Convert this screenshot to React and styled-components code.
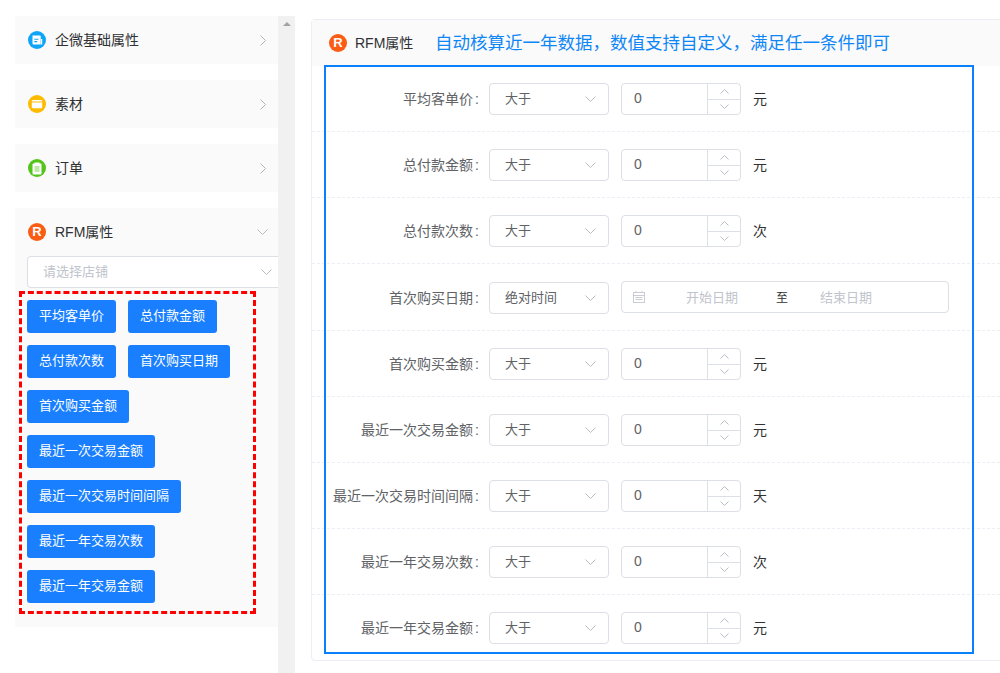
import React from 'react';
import styled, { createGlobalStyle } from 'styled-components';

const Global = createGlobalStyle`
  html, body { margin: 0; padding: 0; background: #fff; height: 673px; overflow: hidden; }
  * { box-sizing: border-box; }
  body { font-family: "Liberation Sans", "Noto Sans CJK SC", sans-serif; font-size: 13px; color: #606266; }
`;

const Page = styled.div`
  display: flex;
  width: 1000px;
  height: 673px;
  overflow: hidden;
  padding-top: 16px;
`;

const Sidebar = styled.aside`
  width: 295px;
  height: 657px;
  flex: none;
  display: flex;
  padding-left: 15px;
`;

const SideList = styled.div`
  width: 263px;
  display: flex;
  flex-direction: column;
  gap: 16px;
`;

const Scrollbar = styled.div`
  width: 17px;
  flex: none;
  background: #f1f1f1;
  display: flex;
  justify-content: center;
  padding-top: 6px;
`;

const ScrollArrow = styled.span`
  width: 0;
  height: 0;
  border-left: 4px solid transparent;
  border-right: 4px solid transparent;
  border-bottom: 4px solid #a3a3a3;
`;

const Group = styled.section`
  background: #fafafa;
  border-radius: 2px;
`;

const GroupHead = styled.div`
  height: 48px;
  display: flex;
  align-items: center;
  padding: 0 10px 0 13px;
  gap: 9px;
  font-size: 14px;
  color: #303133;
`;

const Badge = styled.span`
  width: 18px;
  height: 18px;
  border-radius: 50%;
  background: ${p => p.$bg};
  display: flex;
  align-items: center;
  justify-content: center;
  flex: none;
  color: #fff;
  font: 700 13px/18px "Liberation Sans", sans-serif;
`;

const GroupTitle = styled.span`
  flex: 1;
  margin-bottom: 2px;
`;

const Chev = styled.svg`
  display: block;
  flex: none;
  fill: none;
  stroke: ${p => p.$color || '#b9bcc4'};
  stroke-width: 1;
`;

const RightChevWrap = styled.span`
  display: block;
  margin-right: 2px;
`;

const GroupBody = styled.div`
  padding: 0 0 13px 4px;
`;

const ShopSelect = styled.div`
  width: 252px;
  height: 32px;
  margin: 0 0 3px 8px;
  background: #fff;
  border: 1px solid #dcdfe6;
  border-right: none;
  border-radius: 4px 0 0 4px;
  display: flex;
  align-items: center;
  justify-content: space-between;
  padding: 0 7px 0 15px;
  color: #c0c4cc;
  font-size: 13px;
`;

const SelectText = styled.span`
  margin-bottom: 3px;
`;

const TagBox = styled.div`
  width: 237px;
  height: 323px;
  border: 3px dashed #f00;
  padding: 6px 5px;
  display: flex;
  flex-direction: column;
  gap: 12px;
`;

const TagRow = styled.div`
  display: flex;
  gap: 12px;
`;

const TagButton = styled.div`
  height: 33px;
  padding: 0 12px;
  background: #1a7fff;
  border-radius: 3px;
  color: #fff;
  font-size: 13px;
  line-height: 31px;
  white-space: nowrap;
`;

const Main = styled.main`
  flex: 1;
  min-width: 0;
  padding: 3px 0 0 16px;
`;

const Panel = styled.div`
  position: relative;
  width: 720px;
  height: 642px;
  border: 1px solid #ebeef5;
  border-radius: 4px;
`;

const PanelHead = styled.div`
  height: 46px;
  background: #fafafa;
  display: flex;
  align-items: center;
  padding: 0 0 0 17px;
  font-size: 14px;
  color: #303133;
`;

const HeadName = styled.span`
  margin: 0 0 2px 8px;
  width: 80px;
  flex: none;
`;

const Notice = styled.span`
  font-family: "Noto Sans CJK SC", sans-serif;
  font-size: 17.5px;
  margin-bottom: 3px;
  color: #0f86f5;
  white-space: nowrap;
`;

const Highlight = styled.div`
  position: absolute;
  left: 12px;
  top: 45px;
  width: 650px;
  height: 589px;
  border: 2px solid #0a80ff;
  pointer-events: none;
`;

const Row = styled.div`
  height: ${p => (p.$tall ? 67 : p.$last ? 65 : 66)}px;
  display: flex;
  align-items: center;
  padding-top: ${p => (p.$tall ? 2 : 1)}px;
  border-bottom: ${p => (p.$last ? 'none' : '1px dashed #ebeef5')};
`;

const Label = styled.label`
  width: 167px;
  flex: none;
  text-align: right;
  font-size: 14px;
  margin-bottom: 3px;
  color: #606266;
  white-space: nowrap;
`;

const Colon = styled.span`
  margin-left: 2px;
`;

const Select = styled.div`
  width: 120px;
  height: 32px;
  margin-left: 10px;
  border: 1px solid #dcdfe6;
  border-radius: 4px;
  display: flex;
  align-items: center;
  justify-content: space-between;
  padding: 0 12px 0 15px;
  font-size: 13px;
  color: #606266;
`;

const NumberBox = styled.div`
  width: 120px;
  height: 32px;
  margin-left: 12px;
  border: 1px solid #dcdfe6;
  border-radius: 4px;
  display: flex;
`;

const NumberValue = styled.span`
  flex: 1;
  padding-left: 12px;
  font: 14px/29px "Liberation Sans", sans-serif;
  color: #606266;
`;

const Stepper = styled.div`
  width: 33px;
  border-left: 1px solid #dcdfe6;
  display: flex;
  flex-direction: column;
`;

const StepCell = styled.div`
  flex: 1;
  display: flex;
  align-items: center;
  justify-content: center;
  & + & { border-top: 1px solid #dcdfe6; }
`;

const Unit = styled.span`
  margin: 0 0 3px 12px;
  font-size: 14px;
  color: #303133;
`;

const DateRange = styled.div`
  width: 328px;
  height: 32px;
  margin: 0 0 2px 12px;
  border: 1px solid #dcdfe6;
  border-radius: 4px;
  display: flex;
  align-items: center;
  padding-left: 11px;
  font-size: 13px;
  color: #c0c4cc;
`;

const DateText = styled.span`
  width: 52px;
  text-align: center;
  flex: none;
  margin: 0 0 2px ${p => p.$ml}px;
`;

const DateSep = styled.span`
  color: #303133;
  font-size: 12px;
  margin: 0 0 2px 38px;
  width: 13px;
  flex: none;
`;

const Calendar = () => (
  <svg width="12" height="12" viewBox="0 0 12 12" fill="none" stroke="#c9ccd4" strokeWidth="1">
    <rect x="0.5" y="1.5" width="11" height="10" />
    <path d="M0.5 4.5h11M3 0v2M9 0v2M2.5 6.5h7M2.5 8.5h7" />
  </svg>
);

const ChevDown = ({ color, w = 11, h = 6 }) => (
  <Chev $color={color} width={w} height={h} viewBox="0 0 11 6"><path d="M0.5 0.5 L5.5 5.5 L10.5 0.5" /></Chev>
);
const ChevRight = () => (
  <RightChevWrap>
    <Chev $color="#aeb2ba" width="6" height="11" viewBox="0 0 6 11"><path d="M0.5 0.5 L5.5 5.5 L0.5 10.5" /></Chev>
  </RightChevWrap>
);
const MiniUp = () => (
  <Chev width="9" height="5" viewBox="0 0 9 5"><path d="M0.5 4.5 L4.5 0.5 L8.5 4.5" /></Chev>
);
const MiniDown = () => (
  <Chev width="9" height="5" viewBox="0 0 9 5"><path d="M0.5 0.5 L4.5 4.5 L8.5 0.5" /></Chev>
);

const DocIcon = () => (
  <svg width="12" height="12" viewBox="0 0 12 12">
    <path d="M1.5 1.5h7.2a1 1 0 0 1 1 1v8h-7.2a1 1 0 0 1-1-1z" fill="#fff" />
    <rect x="10" y="5" width="1.2" height="5.5" fill="#fff" />
    <path d="M3.3 5.2h4.2M3.3 7.6h3" stroke="#0ea5f8" strokeWidth="1.1" />
  </svg>
);
const FolderIcon = () => (
  <svg width="12" height="12" viewBox="0 0 12 12">
    <path d="M0.8 3a1 1 0 0 1 1-1h8.4a1 1 0 0 1 1 1v.6H.8z" fill="#fff" />
    <path d="M0.8 4.6h10.4v4.6a1 1 0 0 1-1 1H1.8a1 1 0 0 1-1-1z" fill="#fff" />
  </svg>
);
const ClipIcon = () => (
  <svg width="12" height="13" viewBox="0 0 12 13">
    <rect x="1.5" y="1.5" width="9" height="11" rx="1" fill="#fff" />
    <rect x="3.5" y="0.5" width="5" height="2" fill="#fff" />
    <path d="M3.5 5h5M3.5 7h5M3.5 9h5" stroke="#7fd24f" strokeWidth="1" />
  </svg>
);

const tags = [
  ['平均客单价', '总付款金额'],
  ['总付款次数', '首次购买日期'],
  ['首次购买金额'],
  ['最近一次交易金额'],
  ['最近一次交易时间间隔'],
  ['最近一年交易次数'],
  ['最近一年交易金额'],
];

const fields = [
  ['平均客单价', '元'],
  ['总付款金额', '元'],
  ['总付款次数', '次'],
  ['首次购买日期', null],
  ['首次购买金额', '元'],
  ['最近一次交易金额', '元'],
  ['最近一次交易时间间隔', '天'],
  ['最近一年交易次数', '次'],
  ['最近一年交易金额', '元'],
];

export default function App() {
  return (
    <Page>
      <Global />
      <Sidebar>
        <SideList>
          <Group>
            <GroupHead><Badge $bg="#0ea5f8"><DocIcon /></Badge><GroupTitle>企微基础属性</GroupTitle><ChevRight /></GroupHead>
          </Group>
          <Group>
            <GroupHead><Badge $bg="#fdbb00"><FolderIcon /></Badge><GroupTitle>素材</GroupTitle><ChevRight /></GroupHead>
          </Group>
          <Group>
            <GroupHead><Badge $bg="#52c41a"><ClipIcon /></Badge><GroupTitle>订单</GroupTitle><ChevRight /></GroupHead>
          </Group>
          <Group>
            <GroupHead><Badge $bg="#fa5c14">R</Badge><GroupTitle>RFM属性</GroupTitle><ChevDown /></GroupHead>
            <GroupBody>
              <ShopSelect><SelectText>请选择店铺</SelectText><ChevDown /></ShopSelect>
              <TagBox>
                {tags.map((row, i) => (
                  <TagRow key={i}>
                    {row.map(t => <TagButton key={t}>{t}</TagButton>)}
                  </TagRow>
                ))}
              </TagBox>
            </GroupBody>
          </Group>
        </SideList>
        <Scrollbar><ScrollArrow /></Scrollbar>
      </Sidebar>
      <Main>
        <Panel>
          <PanelHead>
            <Badge $bg="#fa5c14">R</Badge>
            <HeadName>RFM属性</HeadName>
            <Notice>自动核算近一年数据，数值支持自定义，满足任一条件即可</Notice>
          </PanelHead>
          {fields.map(([label, unit], i) => (
            <Row key={label} $tall={!unit} $last={i === fields.length - 1}>
              <Label>{label}<Colon>:</Colon></Label>
              <Select><SelectText>{unit ? '大于' : '绝对时间'}</SelectText><ChevDown /></Select>
              {unit ? (
                <>
                  <NumberBox>
                    <NumberValue>0</NumberValue>
                    <Stepper>
                      <StepCell><MiniUp /></StepCell>
                      <StepCell><MiniDown /></StepCell>
                    </Stepper>
                  </NumberBox>
                  <Unit>{unit}</Unit>
                </>
              ) : (
                <DateRange>
                  <Calendar />
                  <DateText $ml={41}>开始日期</DateText>
                  <DateSep>至</DateSep>
                  <DateText $ml={31}>结束日期</DateText>
                </DateRange>
              )}
            </Row>
          ))}
          <Highlight />
        </Panel>
      </Main>
    </Page>
  );
}
